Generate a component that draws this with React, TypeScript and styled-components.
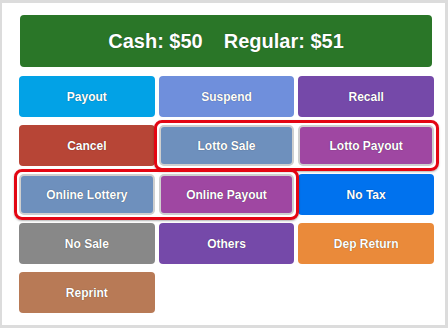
import React from 'react';
import styled, { createGlobalStyle } from 'styled-components';

const GlobalStyle = createGlobalStyle`
  html, body {
    margin: 0;
    padding: 0;
    background: #dcdcdc;
  }
  body {
    font-family: "Liberation Sans", Arial, sans-serif;
  }
`;

const Panel = styled.div`
  box-sizing: border-box;
  width: 443px;
  height: 322px;
  margin: 3px 3px 3px 2px;
  padding: 12px 11px 0 17px;
  background: #ffffff;
`;

const Header = styled.div`
  display: flex;
  align-items: center;
  justify-content: center;
  gap: 21px;
  width: 412px;
  height: 52px;
  margin: 0 0 9px 1px;
  border-radius: 4px;
  background: #2a7628;
  color: #ffffff;
  font-size: 20px;
  font-weight: bold;
  text-shadow: 0 0 1px rgba(0, 0, 0, 0.5);
`;

const Grid = styled.div`
  position: relative;
  display: grid;
  grid-template-columns: repeat(3, 1fr);
  grid-auto-rows: 41px;
  column-gap: 4px;
  row-gap: 8px;
  width: 415px;
`;

const Button = styled.button<{ $bg: string; $marked?: boolean }>`
  box-sizing: border-box;
  display: flex;
  align-items: center;
  justify-content: center;
  padding: 0;
  border: ${(p) => (p.$marked ? '2px solid #cfcfcf' : 'none')};
  border-radius: ${(p) => (p.$marked ? '5px' : '4px')};
  background: ${(p) => p.$bg};
  color: #ffffff;
  font-family: "Liberation Sans", Arial, sans-serif;
  font-size: 12px;
  font-weight: bold;
  text-shadow: 0 0 1px rgba(0, 0, 0, 0.55);
  cursor: pointer;
`;

// red annotation box laid over two neighbouring keys
const Highlight = styled.div<{ $cols: string; $rows: string }>`
  position: absolute;
  grid-column: ${(p) => p.$cols};
  grid-row: ${(p) => p.$rows};
  inset: -5px -5px -5px -5px;
  border: 3px solid #e30613;
  border-radius: 8px;
  box-shadow: 0 1px 2px rgba(0, 0, 0, 0.3);
  pointer-events: none;
`;

type Key = { label: string; bg: string; marked?: boolean };

const keys: Key[] = [
  { label: 'Payout', bg: '#02a2e6' },
  { label: 'Suspend', bg: '#6f8fdc' },
  { label: 'Recall', bg: '#7549a9' },
  { label: 'Cancel', bg: '#b74536' },
  { label: 'Lotto Sale', bg: '#6e90bd', marked: true },
  { label: 'Lotto Payout', bg: '#9f47a2', marked: true },
  { label: 'Online Lottery', bg: '#6e90bd', marked: true },
  { label: 'Online Payout', bg: '#9f47a2', marked: true },
  { label: 'No Tax', bg: '#0072ee' },
  { label: 'No Sale', bg: '#888888' },
  { label: 'Others', bg: '#7549a9' },
  { label: 'Dep Return', bg: '#ea8a3a' },
  { label: 'Reprint', bg: '#b87a56' },
];

export default function App() {
  return (
    <>
      <GlobalStyle />
      <Panel>
        <Header>
          <span>Cash: $50</span>
          <span>Regular: $51</span>
        </Header>
        <Grid>
          {keys.map((k) => (
            <Button key={k.label} $bg={k.bg} $marked={k.marked}>
              {k.label}
            </Button>
          ))}
          <Highlight $cols="2 / 4" $rows="2 / 3" />
          <Highlight $cols="1 / 3" $rows="3 / 4" />
        </Grid>
      </Panel>
    </>
  );
}
